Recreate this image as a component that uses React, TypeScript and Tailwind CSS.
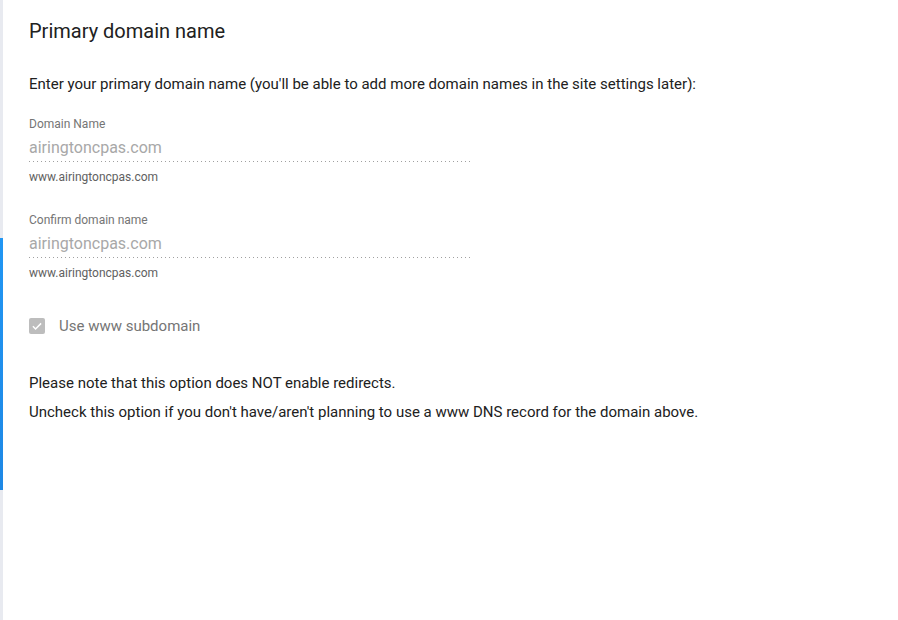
const font = { fontFamily: 'Roboto, "Liberation Sans", sans-serif' };

function DomainField({ label, value, hint }: { label: string; value: string; hint: string }) {
  return (
    <div className="flex w-[441px] flex-col">
      <label className="h-[14px] text-[12px] leading-[14px] text-[#757575]">{label}</label>
      <div className="mt-[4px] h-[26px] text-[16px] leading-[26px] text-[#a8a8a8]">{value}</div>
      <div className="h-px bg-[linear-gradient(to_right,#a0a0a0_1px,transparent_1px)] bg-[length:4px_1px]" />
      <div className="mt-[8px] h-[14px] text-[12px] leading-[14px] text-[#616161]">{hint}</div>
    </div>
  );
}

export default function App() {
  return (
    <div className="flex h-[620px] w-[898px] bg-white" style={font}>
      <div className="flex w-[3px] flex-col bg-[#e8eaf0]">
        <div className="mt-[238px] h-[252px] bg-gradient-to-b from-[#2196f3] to-[#1e88e5]" />
      </div>
      <div className="flex flex-1 flex-col pl-[26px] pt-[18px]">
        <h1 className="h-[26px] text-[20px] leading-[26px] text-[#212121]">Primary domain name</h1>
        <p className="mt-[30px] h-[20px] text-[15px] leading-[20px] text-[#212121]">
          Enter your primary domain name (you'll be able to add more domain names in the site settings later):
        </p>
        <div className="mt-[23px]">
          <DomainField label="Domain Name" value="airingtoncpas.com" hint="www.airingtoncpas.com" />
        </div>
        <div className="mt-[29px]">
          <DomainField label="Confirm domain name" value="airingtoncpas.com" hint="www.airingtoncpas.com" />
        </div>
        <label className="mt-[36px] flex h-[20px] items-center gap-[14px]">
          <span className="flex h-[16px] w-[16px] items-center justify-center rounded-[2px] bg-[#bdbdbd]">
            <svg viewBox="0 0 24 24" className="h-[14px] w-[14px]" fill="none" stroke="white" strokeWidth="2.6">
              <path d="M5 12.5l4.5 4.5L19 7.5" />
            </svg>
          </span>
          <span className="text-[15px] text-[#757575]">Use www subdomain</span>
        </label>
        <p className="mt-[37px] h-[20px] text-[15px] leading-[20px] text-[#212121]">
          Please note that this option does NOT enable redirects.
        </p>
        <p className="mt-[9px] h-[20px] text-[15px] leading-[20px] text-[#212121]">
          Uncheck this option if you don't have/aren't planning to use a www DNS record for the domain above.
        </p>
      </div>
    </div>
  );
}
